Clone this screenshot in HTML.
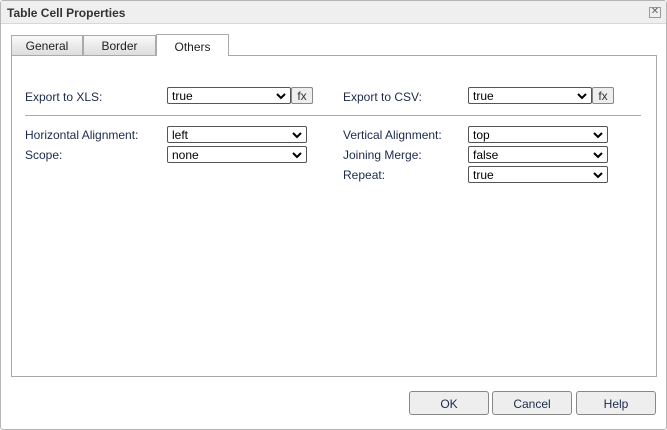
<!DOCTYPE html>
<html><head><style>
*{box-sizing:border-box;margin:0;padding:0}
body{width:667px;height:430px;background:#fff;font-family:"Liberation Sans",sans-serif;font-size:12px;color:#1c2a4a;position:relative;overflow:hidden}
.dlg{position:absolute;left:0;top:0;width:667px;height:430px;border:1px solid #b5b5b5;border-radius:3px}
.title{position:absolute;left:1px;top:1px;width:665px;height:23px;background:#efefef;border-bottom:1px solid #d8d8d8;font-weight:bold;font-size:12px;color:#333;padding:5px 0 0 6px}
.x{position:absolute;left:649px;top:7px;width:12px;height:11px;border:1px solid #999;font-size:10px;line-height:8px;text-align:center;color:#666}
.tab{position:absolute;top:35px;height:20px;border:1px solid #aaa;border-bottom:none;background:linear-gradient(#fafafa,#ddd);text-align:center;padding-top:3px;color:#222}
.panel{position:absolute;left:11px;top:55px;width:646px;height:322px;border:1px solid #aaa;background:#fff}
.lbl{position:absolute;color:#1c2a4a}
.sel{position:absolute;height:17px;border:1px solid #555;border-radius:2px;background:#fff;padding:1px 0 0 4px;color:#000}
.sel svg{position:absolute;right:4px;top:5px}
.fx{position:absolute;width:22px;height:17px;border:1px solid #888;border-radius:2px;background:#eee;text-align:center;padding-top:1px;color:#333}
.btn{position:absolute;top:391px;width:80px;height:24px;border:1px solid #888;border-radius:3px;background:#eee;text-align:center;padding-top:5px;color:#1c2a4a}
</style></head><body>
<div class="dlg"></div>
<div class="title">Table Cell Properties</div>
<div class="x">✕</div>
<div class="panel"></div>
<div class="tab" style="left:11px;width:72px">General</div>
<div class="tab" style="left:83px;width:73px">Border</div>
<div class="tab" style="left:156px;top:34px;height:22px;width:73px;background:#fff;padding-top:5px">Others</div>
<div class="lbl" style="left:25px;top:90px">Export to XLS:</div>
<div class="sel" style="left:167px;top:87px;width:124px">true<svg width="10" height="7"><path d="M1 1L5 5L9 1" stroke="#000" stroke-width="2" fill="none"/></svg></div>
<div class="fx" style="left:291px;top:87px">fx</div>
<div class="lbl" style="left:343px;top:90px">Export to CSV:</div>
<div class="sel" style="left:468px;top:87px;width:124px">true<svg width="10" height="7"><path d="M1 1L5 5L9 1" stroke="#000" stroke-width="2" fill="none"/></svg></div>
<div class="fx" style="left:592px;top:87px">fx</div>
<div style="position:absolute;left:25px;top:115px;width:616px;height:1px;background:#aaa"></div>
<div class="lbl" style="left:25px;top:128px">Horizontal Alignment:</div>
<div class="sel" style="left:167px;top:126px;width:140px">left<svg width="10" height="7"><path d="M1 1L5 5L9 1" stroke="#000" stroke-width="2" fill="none"/></svg></div>
<div class="lbl" style="left:25px;top:148px">Scope:</div>
<div class="sel" style="left:167px;top:146px;width:140px">none<svg width="10" height="7"><path d="M1 1L5 5L9 1" stroke="#000" stroke-width="2" fill="none"/></svg></div>
<div class="lbl" style="left:343px;top:128px">Vertical Alignment:</div>
<div class="sel" style="left:468px;top:126px;width:140px">top<svg width="10" height="7"><path d="M1 1L5 5L9 1" stroke="#000" stroke-width="2" fill="none"/></svg></div>
<div class="lbl" style="left:343px;top:148px">Joining Merge:</div>
<div class="sel" style="left:468px;top:146px;width:140px">false<svg width="10" height="7"><path d="M1 1L5 5L9 1" stroke="#000" stroke-width="2" fill="none"/></svg></div>
<div class="lbl" style="left:343px;top:168px">Repeat:</div>
<div class="sel" style="left:468px;top:166px;width:140px">true<svg width="10" height="7"><path d="M1 1L5 5L9 1" stroke="#000" stroke-width="2" fill="none"/></svg></div>
<div class="btn" style="left:409px">OK</div>
<div class="btn" style="left:492px">Cancel</div>
<div class="btn" style="left:576px">Help</div>
</body></html>
